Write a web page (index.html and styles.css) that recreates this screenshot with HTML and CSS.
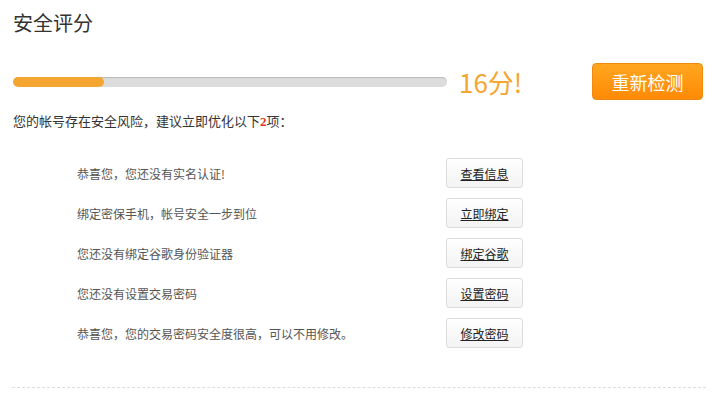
FILE: index.html
```html
<!DOCTYPE html>
<html lang="zh-CN">
<head>
<meta charset="utf-8">
<title>安全评分</title>
<link rel="stylesheet" href="styles.css">
</head>
<body>
<div class="page">
  <h1 class="title">安全评分</h1>
  <div class="score-row">
    <div class="bar"><div class="bar-fill" style="width:91px"></div></div>
    <div class="score">16分!</div>
    <a class="recheck" href="#">重新检测</a>
  </div>
  <p class="summary">您的帐号存在安全风险，建议立即优化以下<b class="num">2</b>项：</p>
  <ul class="items">
    <li class="item"><span class="item-text">恭喜您，您还没有实名认证!</span><a class="btn" href="#">查看信息</a></li>
    <li class="item"><span class="item-text">绑定密保手机，帐号安全一步到位</span><a class="btn" href="#">立即绑定</a></li>
    <li class="item"><span class="item-text">您还没有绑定谷歌身份验证器</span><a class="btn" href="#">绑定谷歌</a></li>
    <li class="item"><span class="item-text">您还没有设置交易密码</span><a class="btn" href="#">设置密码</a></li>
    <li class="item"><span class="item-text">恭喜您，您的交易密码安全度很高，可以不用修改。</span><a class="btn" href="#">修改密码</a></li>
  </ul>
  <div class="divider"></div>
</div>
</body>
</html>
```
FILE: styles.css
```css
* { box-sizing: border-box; }
html, body { margin: 0; padding: 0; background: #fff; }
body {
  font-family: "Noto Sans CJK SC", "Liberation Sans", sans-serif;
  color: #333;
}
.page {
  width: 722px;
  padding: 9px 19px 0 13px;
}
.title {
  margin: 0;
  font-size: 20px;
  font-weight: normal;
  line-height: 28px;
  color: #333;
}
.score-row {
  display: flex;
  align-items: center;
  margin-top: 26px;
  height: 37px;
}
.bar {
  width: 434px;
  height: 10px;
  border-radius: 5px;
  background: #dcdcdc;
  box-shadow: inset 0 2px 1px -1px #b9b9b9;
  overflow: hidden;
}
.bar-fill {
  height: 100%;
  border-radius: 5px;
  background: #f5a630;
}
.score {
  margin-left: 12px;
  font-size: 26px;
  color: #f5a630;
  line-height: 30px;
  font-family: "Noto Sans CJK SC", sans-serif;
}
.recheck {
  margin-left: auto;
  width: 111px;
  height: 37px;
  display: flex;
  align-items: center;
  justify-content: center;
  border-radius: 4px;
  border: 1px solid #f08a0e;
  background: linear-gradient(#ffa620, #ff8a05);
  color: #fff;
  font-size: 18px;
  text-decoration: none;
}
.summary {
  margin: 12px 0 0;
  font-size: 13px;
  line-height: 18px;
  color: #333;
}
.num { color: #e8331a; font-family: "Liberation Serif", serif; }
.items {
  list-style: none;
  margin: 22px 0 0;
  padding: 0 0 0 64px;
  width: 510px;
}
.item {
  display: flex;
  align-items: center;
  justify-content: space-between;
  height: 40px;
}
.item-text {
  font-size: 12px;
  color: #555;
}
.btn {
  width: 77px;
  height: 30px;
  display: flex;
  align-items: center;
  justify-content: center;
  border: 1px solid #dcdcdc;
  border-radius: 3px;
  background: linear-gradient(#fff, #f3f3f3);
  color: #222;
  font-size: 12px;
  text-decoration: underline;
}
.divider {
  margin-top: 34px;
  margin-left: -1px;
  width: 694px;
  border-top: 1px dashed #ddd;
}
```
